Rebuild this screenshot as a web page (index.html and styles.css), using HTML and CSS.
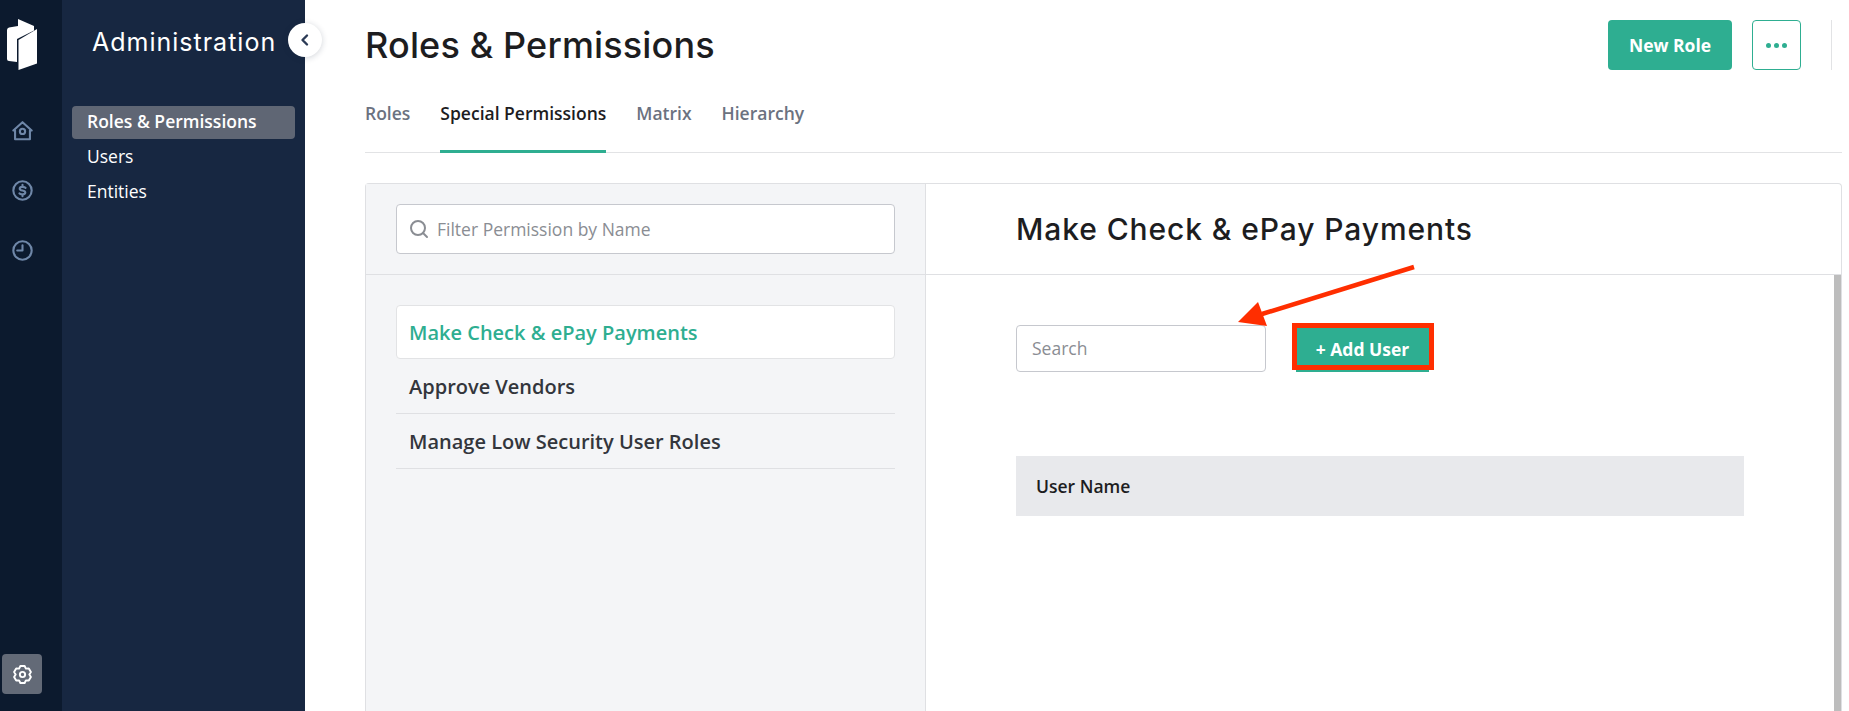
FILE: index.html
```html
<!DOCTYPE html>
<html lang="en">
<head>
<meta charset="utf-8">
<title>Roles &amp; Permissions</title>
<link rel="stylesheet" href="styles.css">
</head>
<body>
<div class="app">
  <nav class="rail">
    <svg class="logo" width="30" height="51" viewBox="0 0 30 51">
      <path fill="#fff" d="M11 0 L27 7 V11.5 L10 20 V43 L2 42 Q0 42 0 40 V11 Q0 9 2 8.5 L11 7 Z"/>
      <path fill="#fff" d="M11.5 21 L30 10 V44.5 L11.5 51 Z"/>
    </svg>
    <div class="rail-icons">
      <svg class="rail-icon" width="21" height="21" viewBox="0 0 24 24" fill="none" stroke="#6f87a8" stroke-width="2.4" stroke-linejoin="round"><path d="M1.5 12 L12 2.5 L22.5 12 H20.5 V22 H3.5 V12 Z"/><circle cx="12" cy="13" r="3"/></svg>
      <svg class="rail-icon" width="21" height="21" viewBox="0 0 24 24" fill="none" stroke="#6f87a8" stroke-width="2.4" stroke-linecap="round"><circle cx="12" cy="12" r="10.5"/><path d="M15.5 9 C14.5 7.5 8.8 7 8.8 10 C8.8 13 15.2 11 15.2 14.2 C15.2 17 9.5 16.8 8.5 15.3 M12 5.5 V7.5 M12 16.5 V18.5"/></svg>
      <svg class="rail-icon" width="21" height="21" viewBox="0 0 24 24" fill="none" stroke="#6f87a8" stroke-width="2.4" stroke-linecap="round" stroke-linejoin="round"><circle cx="12" cy="12" r="10.5"/><path d="M12 6 V12 H6"/></svg>
    </div>
    <div class="rail-settings">
      <svg width="21" height="21" viewBox="0 0 24 24" fill="none" stroke="#fff" stroke-width="2.2" stroke-linejoin="round"><path d="M9.58 2.3 L14.42 2.3 L15.9 5.25 L19.19 5.05 L21.61 9.24 L19.8 12 L21.61 14.76 L19.19 18.95 L15.9 18.75 L14.42 21.7 L9.58 21.7 L8.1 18.75 L4.81 18.95 L2.39 14.76 L4.2 12 L2.39 9.24 L4.81 5.05 L8.1 5.25 Z"/><circle cx="12" cy="12" r="3"/></svg>
    </div>
  </nav>
  <aside class="side">
    <h2 class="side-title">Administration</h2>
    <button class="collapse" aria-label="Collapse">
      <svg width="12" height="14" viewBox="0 0 12 14" fill="none" stroke="#2b3a55" stroke-width="2.4" stroke-linecap="round" stroke-linejoin="round"><path d="M8 2.5 L3.5 7 L8 11.5"/></svg>
    </button>
    <ul class="side-menu">
      <li class="side-item is-active">Roles &amp; Permissions</li>
      <li class="side-item">Users</li>
      <li class="side-item">Entities</li>
    </ul>
  </aside>
  <main class="main">
    <header class="top">
      <h1 class="page-title">Roles &amp; Permissions</h1>
      <div class="top-actions">
        <button class="btn-primary">New Role</button>
        <button class="btn-more" aria-label="More"><i></i><i></i><i></i></button>
        <span class="top-sep"></span>
      </div>
    </header>
    <div class="tabs">
      <span class="tab">Roles</span>
      <span class="tab is-active">Special Permissions</span>
      <span class="tab">Matrix</span>
      <span class="tab">Hierarchy</span>
    </div>
    <section class="panel">
      <div class="col-left">
        <div class="filter-bar">
          <div class="filter">
            <svg width="20" height="20" viewBox="0 0 20 20" fill="none" stroke="#8a8d93" stroke-width="2" stroke-linecap="round"><circle cx="9" cy="9" r="7"/><path d="M14 14 L18 18"/></svg>
            <span>Filter Permission by Name</span>
          </div>
        </div>
        <ul class="perm-list">
          <li class="perm is-active">Make Check &amp; ePay Payments</li>
          <li class="perm">Approve Vendors</li>
          <li class="perm">Manage Low Security User Roles</li>
        </ul>
      </div>
      <div class="col-right">
        <div class="detail-head"><h2 class="detail-title">Make Check &amp; ePay Payments</h2></div>
        <div class="detail-body">
          <div class="tools">
            <div class="search">Search</div>
            <div class="add-wrap">
              <button class="btn-add">+ Add User</button>
              <span class="add-mark"></span>
            </div>
          </div>
          <div class="table-head">User Name</div>
        </div>
        <div class="scrollbar"></div>
      </div>
    </section>
  </main>
</div>
<svg class="arrow" width="190" height="70" viewBox="0 0 190 70"><path fill="none" stroke="#ff2e00" stroke-width="4.5" d="M184 7 L32 54"/><path fill="#ff2e00" d="M8 62 L28 42 L37 66 Z"/></svg>
</body>
</html>
```
FILE: styles.css
```css
* { box-sizing: border-box; }
html, body { margin: 0; height: 100%; overflow: hidden; }
body { font-family: "Open Sans", sans-serif; background: #fff; color: #1c1c1e; }
ul { list-style: none; margin: 0; padding: 0; }
h1, h2 { margin: 0; font-weight: 500; }
button { font-family: inherit; border: 0; padding: 0; }
.app { display: flex; height: 711px; }

.rail { width: 62px; background: #0c1a2e; display: flex; flex-direction: column; align-items: center; padding: 19px 18px 0 0; }
.logo { display: block; flex: none; }
.rail-icons { display: flex; flex-direction: column; gap: 39px; margin-top: 50px; }
.rail-icon { display: block; }
.rail-settings { margin-top: auto; margin-bottom: 17px; width: 40px; height: 40px; flex: none; border-radius: 4px; background: #636a77; display: flex; align-items: center; justify-content: center; }

.side { position: relative; width: 243px; background: #172741; color: #fff; padding: 0 10px; }
.side-title { font-family: "Inter", sans-serif; font-weight: 400; font-size: 25px; line-height: 32px; margin: 26px 0 0 20px; letter-spacing: 1px; white-space: nowrap; }
.collapse { position: absolute; top: 23px; right: -17px; width: 34px; height: 34px; border-radius: 50%; background: #fff; box-shadow: 0 1px 6px rgba(23,39,65,.2); display: flex; align-items: center; justify-content: center; }
.side-menu { margin-top: 48px; }
.side-item { height: 35px; line-height: 30px; font-size: 17.5px; padding-left: 15px; }
.side-item.is-active { height: 33px; margin-bottom: 2px; line-height: 31px; font-weight: 600; background: #5f6674; border-radius: 4px; }

.main { flex: 1; min-width: 0; padding: 0 7px 0 60px; display: flex; flex-direction: column; }
.top { display: flex; justify-content: space-between; align-items: flex-start; height: 90px; }
.page-title { font-family: "Inter", sans-serif; font-size: 36px; line-height: 44px; margin-top: 23px; letter-spacing: .15px; color: #1d1d1f; }
.top-actions { display: flex; align-items: center; margin: 20px 10px 0 0; }
.btn-primary { width: 124px; height: 50px; border-radius: 4px; background: #2eae91; color: #fff; font-size: 17.5px; font-weight: 700; }
.btn-more { width: 49px; height: 50px; margin-left: 20px; border: 1px solid #2eae91; border-radius: 4px; background: #fff; display: flex; align-items: center; justify-content: center; gap: 3px; }
.btn-more i { width: 5px; height: 5px; border-radius: 50%; background: #2eae91; }
.top-sep { width: 1px; height: 50px; background: #e2e3e5; margin-left: 30px; }

.tabs { display: flex; gap: 30px; height: 63px; border-bottom: 1px solid #e2e3e5; }
.tab { font-size: 17.5px; font-weight: 600; color: #6b7280; line-height: 24px; padding-top: 11px; height: 63px; white-space: nowrap; }
.tab.is-active { color: #1d1d1f; border-bottom: 3px solid #2eae91; }

.panel { flex: 1; margin-top: 30px; display: flex; border: 1px solid #dfe0e3; border-bottom: 0; border-radius: 4px 4px 0 0; min-height: 0; }
.col-left { width: 560px; background: #f4f5f7; border-right: 1px solid #dfe0e3; }
.filter-bar { height: 91px; padding: 20px 30px 0; border-bottom: 1px solid #dfe0e3; }
.filter { height: 50px; background: #fff; border: 1px solid #c6c8ce; border-radius: 4px; display: flex; align-items: center; gap: 8px; padding-left: 12px; font-size: 17.5px; color: #8a8d93; }
.perm-list { padding: 30px 30px 0; }
.perm { height: 55px; line-height: 55px; padding-left: 13px; font-size: 20px; font-weight: 600; color: #33363c; border-bottom: 1px solid #dfe0e3; }
.perm.is-active { color: #2eae91; background: #fff; border: 1px solid #e2e3e5; border-radius: 4px; height: 54px; line-height: 53px; padding-left: 12px; }

.col-right { position: relative; flex: 1; min-width: 0; }
.detail-head { height: 91px; border-bottom: 1px solid #dfe0e3; padding-left: 90px; display: flex; align-items: center; }
.detail-title { font-family: "Inter", sans-serif; font-size: 30px; color: #1d1d1f; letter-spacing: .9px; white-space: nowrap; }
.detail-body { padding: 50px 0 0 90px; }
.tools { display: flex; align-items: center; gap: 30px; }
.search { width: 250px; height: 47px; border: 1px solid #c6c8ce; border-radius: 4px; line-height: 45px; padding-left: 15px; font-size: 17.5px; color: #8a8d93; }
.add-wrap { position: relative; }
.btn-add { display: block; width: 133px; height: 47px; background: #2eae91; color: #fff; font-size: 17.5px; font-weight: 700; }
.add-mark { position: absolute; left: -4px; top: -2px; width: 142px; height: 47px; border: 5px solid #ff2e00; }
.table-head { width: 728px; height: 60px; margin-top: 84px; background: #e8e9ec; line-height: 60px; padding-left: 20px; font-size: 17.5px; font-weight: 600; color: #1d1d1f; }
.scrollbar { position: absolute; top: 91px; right: 0; bottom: 0; width: 7px; background: #bdbdbd; }

.arrow { position: absolute; left: 1230px; top: 260px; }
```
